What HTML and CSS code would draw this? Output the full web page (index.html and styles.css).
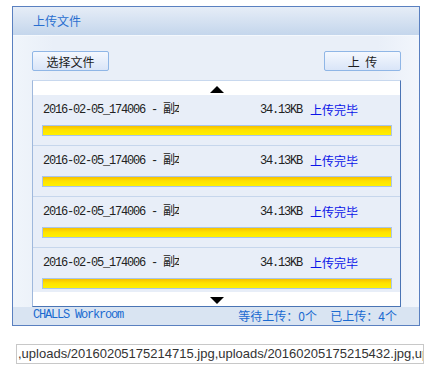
FILE: index.html
```html
<!DOCTYPE html>
<html>
<head>
	<meta charset='utf-8'>
	<title>upload</title>
	<link rel="stylesheet" href="styles.css">
</head>
<body>
	<div class="uploader">
		<div class="uploader-head">上传文件</div>
		<div class="uploader-body">
			<div class="toolbar">
				<button class="btn">选择文件</button>
				<button class="btn btn-upload">上 传</button>
			</div>
			<div class="queue">
				<div class="queue-arrow"><span class="arrow-up"></span></div>
				<ul class="queue-list">
					<li class="file">
						<div class="file-row">
							<span class="file-name">2016-02-05_174006 - 副本.jpg</span>
							<span class="file-size">34.13KB</span>
							<span class="file-status">上传完毕</span>
						</div>
						<div class="file-bar"></div>
					</li>
					<li class="file">
						<div class="file-row">
							<span class="file-name">2016-02-05_174006 - 副本.jpg</span>
							<span class="file-size">34.13KB</span>
							<span class="file-status">上传完毕</span>
						</div>
						<div class="file-bar"></div>
					</li>
					<li class="file">
						<div class="file-row">
							<span class="file-name">2016-02-05_174006 - 副本.jpg</span>
							<span class="file-size">34.13KB</span>
							<span class="file-status">上传完毕</span>
						</div>
						<div class="file-bar"></div>
					</li>
					<li class="file">
						<div class="file-row">
							<span class="file-name">2016-02-05_174006 - 副本.jpg</span>
							<span class="file-size">34.13KB</span>
							<span class="file-status">上传完毕</span>
						</div>
						<div class="file-bar"></div>
					</li>
				</ul>
				<div class="queue-arrow"><span class="arrow-down"></span></div>
			</div>
		</div>
		<div class="uploader-foot">
			<span class="brand">CHALLS Workroom</span>
			<span class="stat">等待上传：0个&nbsp;&nbsp;&nbsp;&nbsp;&nbsp;已上传：4个</span>
		</div>
	</div>
	<div class="result">,uploads/20160205175214715.jpg,uploads/20160205175215432.jpg,uploads/20160205175216001.jpg</div>
</body>
</html>
```
FILE: styles.css
```css
* {
	padding: 0;
	margin: 0;
	box-sizing: border-box;
}
li {
	list-style: none;
}
body {
	font-family: "Noto Sans CJK SC", sans-serif;
	font-size: 12px;
	color: #222;
	background: #fff;
}
.uploader {
	margin: 6px 0 0 12px;
	width: 408px;
	border: 1px solid #5a80c0;
	background: #ecf1f9;
}
.uploader-head {
	height: 29px;
	padding-left: 20px;
	line-height: 28px;
	font-size: 12px;
	color: #2a6fd0;
	background: linear-gradient(#e6edf7, #c4d6ec);
	border-bottom: 1px solid #f4f8fd;
}
.uploader-body {
	padding: 15px 18px 0 19px;
	background: linear-gradient(90deg, #f0f5fb, #e9eff8 10%, #e9eff8 90%, #f2f6fc);
}
.toolbar {
	display: flex;
	justify-content: space-between;
	height: 20px;
}
.btn {
	width: 77px;
	height: 20px;
	border: 1px solid #8fb6e6;
	border-radius: 2px;
	background: linear-gradient(#f4f8fe, #d9e5f8);
	font-family: "Noto Sans CJK SC", sans-serif;
	font-size: 12px;
	line-height: 17px;
	color: #1c1c1c;
}
.btn-upload {
	word-spacing: 3px;
}
.queue {
	margin-top: 9px;
	height: 227px;
	border: 1px solid #4a74b4;
	border-top-color: #c8d8ee;
	border-left-color: #9fb8dc;
	background: #fff;
}
.queue-arrow {
	height: 14px;
	display: flex;
	justify-content: center;
	align-items: center;
	background: #fff;
}
.arrow-up {
	border-left: 7px solid transparent;
	border-right: 7px solid transparent;
	border-bottom: 7px solid #000;
	margin-top: 3px;
}
.arrow-down {
	border-left: 7px solid transparent;
	border-right: 7px solid transparent;
	border-top: 7px solid #000;
	margin-top: 3px;
}
.queue-list {
	height: 197px;
	overflow: hidden;
}
.file {
	height: 51px;
	padding: 6px 8px 0 9px;
	background: #e8eef8;
	border-bottom: 1px solid #c6d6ec;
}
.file-row {
	display: flex;
	height: 18px;
	line-height: 18px;
	padding-right: 34px;
}
.file-name {
	width: 137px;
	padding-left: 1px;
	overflow: hidden;
	white-space: nowrap;
	font-family: "Liberation Mono", "Noto Sans CJK SC", monospace;
	letter-spacing: -1.2px;
	color: #222;
}
.file-size {
	margin-left: auto;
	font-family: "Liberation Mono", monospace;
	letter-spacing: -1.2px;
	color: #222;
}
.file-status {
	margin-left: 8px;
	color: #0a14e8;
}
.file-bar {
	margin-top: 6px;
	height: 11px;
	border: 1px solid #a9c5e9;
	background: linear-gradient(#f6c000, #ffe200 45%, #fff000);
}
.uploader-foot {
	display: flex;
	justify-content: space-between;
	height: 18px;
	padding: 0 22px 0 20px;
	line-height: 17px;
	background: #d9e4f2;
	color: #1a6ad0;
}
.brand {
	font-family: "Liberation Mono", monospace;
	letter-spacing: -1.2px;
}
.result {
	margin: 18px 0 0 16px;
	width: 408px;
	height: 20px;
	padding-left: 1px;
	border: 1px solid #c8c8c8;
	overflow: hidden;
	white-space: nowrap;
	font-family: "Liberation Sans", Arial, sans-serif;
	font-size: 13px;
	line-height: 18px;
	color: #333;
}
```
